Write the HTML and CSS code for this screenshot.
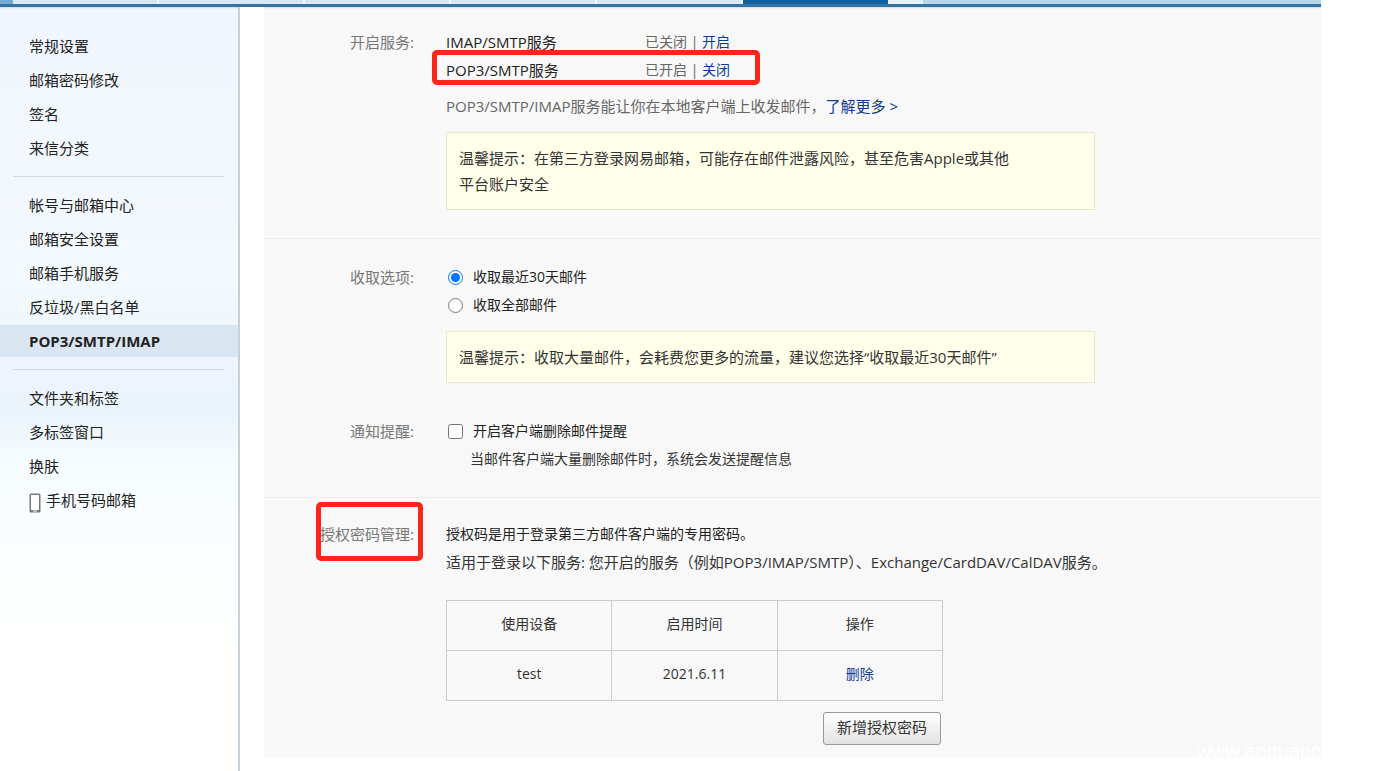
FILE: index.html
```html
<!DOCTYPE html>
<html lang="zh-CN">
<head>
    <meta charset="UTF-8">
    <meta name="viewport" content="width=device-width, initial-scale=1.0">
    <title>POP3/SMTP/IMAP</title>
    <link rel="stylesheet" href="styles.css">
</head>
<body>
    <div class="page">
        <div class="tabs">
            <span class="tab-edge"></span>
            <span class="tab"></span>
            <span class="tab"></span>
            <span class="tab"></span>
            <span class="tab"></span>
            <span class="tab"></span>
            <span class="tab active"></span>
            <span class="tab-more"></span>
            <span class="tab-rest"></span>
        </div>

        <div class="layout">
            <nav class="sidebar">
                <ul>
                    <li><a href="#">常规设置</a></li>
                    <li><a href="#">邮箱密码修改</a></li>
                    <li><a href="#">签名</a></li>
                    <li><a href="#">来信分类</a></li>
                </ul>
                <hr>
                <ul>
                    <li><a href="#">帐号与邮箱中心</a></li>
                    <li><a href="#">邮箱安全设置</a></li>
                    <li><a href="#">邮箱手机服务</a></li>
                    <li><a href="#">反垃圾/黑白名单</a></li>
                    <li><a href="#" class="active">POP3/SMTP/IMAP</a></li>
                </ul>
                <hr>
                <ul>
                    <li><a href="#">文件夹和标签</a></li>
                    <li><a href="#">多标签窗口</a></li>
                    <li><a href="#">换肤</a></li>
                    <li>
                        <a href="#" class="with-icon">
                            <svg class="phone" width="12" height="20" viewBox="0 0 12 20">
                                <rect x="0.5" y="0.5" width="11" height="19" rx="1.5" fill="#777"/>
                                <rect x="2" y="2" width="8" height="15" fill="#fff"/>
                                <rect x="4" y="17.5" width="4" height="1" fill="#fff"/>
                            </svg>手机号码邮箱</a>
                    </li>
                </ul>
            </nav>

            <main class="content">
                <!-- 开启服务 -->
                <section>
                    <div class="field">
                        <div class="label">开启服务:</div>
                        <div class="body">
                            <div class="service">
                                <span class="name">IMAP/SMTP服务</span>
                                <span class="state">已关闭 | <a href="#">开启</a></span>
                            </div>
                            <div class="service marked">
                                <span class="name">POP3/SMTP服务</span>
                                <span class="state">已开启 | <a href="#">关闭</a></span>
                            </div>
                            <p class="desc">POP3/SMTP/IMAP服务能让你在本地客户端上收发邮件，<a href="#">了解更多 &gt;</a></p>
                            <div class="tip">温馨提示：在第三方登录网易邮箱，可能存在邮件泄露风险，甚至危害Apple或其他<br>平台账户安全</div>
                        </div>
                    </div>
                </section>

                <!-- 收取选项 / 通知提醒 -->
                <section>
                    <div class="field">
                        <div class="label">收取选项:</div>
                        <div class="body">
                            <div class="option">
                                <input type="radio" name="range" id="range30" checked>
                                <label for="range30">收取最近30天邮件</label>
                            </div>
                            <div class="option">
                                <input type="radio" name="range" id="rangeAll">
                                <label for="rangeAll">收取全部邮件</label>
                            </div>
                            <div class="tip">温馨提示：收取大量邮件，会耗费您更多的流量，建议您选择“收取最近30天邮件”</div>
                        </div>
                    </div>
                    <div class="field">
                        <div class="label">通知提醒:</div>
                        <div class="body">
                            <div class="option">
                                <input type="checkbox" id="notify">
                                <label for="notify">开启客户端删除邮件提醒</label>
                            </div>
                            <p class="note">当邮件客户端大量删除邮件时，系统会发送提醒信息</p>
                        </div>
                    </div>
                </section>

                <!-- 授权密码管理 -->
                <section>
                    <div class="field">
                        <div class="label marked">授权密码管理:</div>
                        <div class="body">
                            <p>授权码是用于登录第三方邮件客户端的专用密码。</p>
                            <p class="scope">适用于登录以下服务: 您开启的服务（例如POP3/IMAP/SMTP）、Exchange/CardDAV/CalDAV服务。</p>
                            <div class="devices">
                                <table>
                                    <thead>
                                        <tr>
                                            <th>使用设备</th>
                                            <th>启用时间</th>
                                            <th>操作</th>
                                        </tr>
                                    </thead>
                                    <tbody>
                                        <tr>
                                            <td>test</td>
                                            <td>2021.6.11</td>
                                            <td><a href="#">删除</a></td>
                                        </tr>
                                    </tbody>
                                </table>
                                <button type="button" class="add">新增授权密码</button>
                            </div>
                        </div>
                    </div>
                </section>
                <div class="watermark">www.anquanc</div>
            </main>
        </div>
    </div>
</body>
</html>
```

FILE: styles.css
```css
*,
*::after {
    box-sizing: border-box;
}

body {
    margin: 0;
    background-color: #fff;
    font-family: "Open Sans", "Noto Sans CJK SC", sans-serif;
    font-size: 14px;
    line-height: 28px;
    color: #222;
}

ul,
p {
    margin: 0;
    padding: 0;
    list-style: none;
}

a {
    color: #0f3a96;
    text-decoration: none;
}

.page {
    display: flex;
    flex-direction: column;
    min-height: 100vh;
    margin-right: 68px;
}

/* top tabs */
.tabs {
    display: flex;
    height: 7px;
    border-bottom: 3px solid #3573a3;
    background-color: #b9d6ec;
}

.tab-edge {
    width: 13px;
    background-color: #74abd5;
}

.tab {
    width: 146px;
    background-color: #dbe8f3;
    border-right: 2px solid #f5f9fc;
}

.tab.active {
    width: 145px;
    background-color: #11609f;
    border-right: none;
}

.tab-more {
    width: 35px;
    background-color: #eaf2f9;
}

.tab-rest {
    flex: 1;
}

.layout {
    display: flex;
    flex: 1;
}

/* sidebar */
.sidebar {
    flex: none;
    width: 240px;
    padding-top: 23px;
    border-right: 2px solid #c6d0d8;
    background: linear-gradient(#cfdae3 0, #f1f6fe 2px, #f3f7fe 170px, #f3fafd 280px, #eef4fc 350px, #ebf4fb 410px, #f6fcff 450px, #fbfeff 540px, #fff 650px);
    font-size: 15px;
}

.sidebar li {
    margin-bottom: 2px;
}

.sidebar a {
    display: block;
    padding-left: 29px;
    line-height: 32px;
    color: #222;
}

.sidebar a.active {
    background-color: #d9e6f1;
    font-weight: bold;
}

.sidebar hr {
    height: 1px;
    margin: 12px 14px 12px 13px;
    border: none;
    background-color: #d3d9df;
}

.sidebar .with-icon {
    display: flex;
    gap: 5px;
}

.phone {
    margin-top: 9px;
}

/* settings panel */
.content {
    position: relative;
    flex: 1;
    align-self: flex-start;
    margin-left: 24px;
    background: linear-gradient(#d4dde4 0, #f8f8f8 2px);
}

section {
    padding: 24px 0;
}

section:first-child {
    padding: 21px 0 28px;
}

section:last-of-type {
    padding: 22px 0 12px;
}

section + section {
    border-top: 1px solid #ececec;
}

.field {
    display: grid;
    grid-template-columns: 150px 1fr;
    column-gap: 32px;
}

.field + .field {
    margin-top: 34px;
}

.label {
    text-align: right;
    font-size: 15px;
    color: #777;
}

.service {
    display: flex;
}

.service .name {
    width: 199px;
    font-size: 15px;
}

.service .state,
.desc {
    color: #666;
}

.desc {
    margin-top: 8px;
    font-size: 15px;
}

.tip {
    max-width: 649px;
    margin-top: 12px;
    padding: 12px;
    border: 1px solid #e6e8ce;
    background-color: #ffffea;
    font-size: 15px;
    line-height: 26px;
    color: #333;
}

.option {
    display: flex;
    align-items: center;
}

.option input {
    width: 15px;
    height: 15px;
    margin: 0 10px 0 2px;
}

.note {
    padding-left: 24px;
    color: #333;
}

.scope {
    font-size: 15px;
    color: #333;
}

/* red frames */
.marked {
    position: relative;
}

.marked::after {
    content: "";
    position: absolute;
    border: 5px solid #fb2617;
    border-radius: 5px;
}

.service.marked::after {
    top: -6px;
    left: -14px;
    width: 328px;
    height: 35px;
}

.label.marked::after {
    top: -18px;
    left: 52px;
    width: 107px;
    height: 59px;
}

/* devices */
.devices {
    display: flex;
    flex-direction: column;
    max-width: 497px;
    margin-top: 24px;
}

table {
    width: 100%;
    table-layout: fixed;
    border-collapse: collapse;
}

th,
td {
    height: 50px;
    padding: 0 0 4px;
    border: 1px solid #ccc;
    font-weight: normal;
    text-align: center;
    color: #333;
}

.add {
    align-self: flex-end;
    height: 33px;
    margin: 11px 2px 0 0;
    padding: 0 13px 4px;
    border: 1px solid #999;
    border-radius: 3px;
    background: linear-gradient(#fff, #e2e2e2);
    font-family: inherit;
    font-size: 15px;
    color: #333;
}

.watermark {
    position: absolute;
    right: 0;
    bottom: -8px;
    font-family: "Liberation Sans", sans-serif;
    font-size: 20px;
    color: #fff;
}
```
